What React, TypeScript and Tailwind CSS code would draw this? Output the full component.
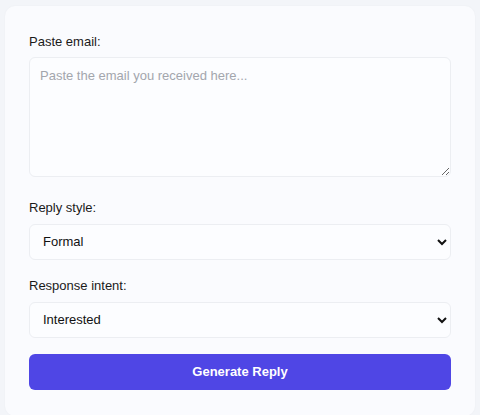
import React, { useState } from 'react';

const App: React.FC = () => {
  const [email, setEmail] = useState('');
  const [style, setStyle] = useState('Formal');
  const [intent, setIntent] = useState('Interested');

  return (
    <div className="min-h-[415px] bg-[#f3f5f9] pt-[6px] pl-[5px] font-['Liberation_Sans',Arial,sans-serif] text-[13px]">
      <div className="w-[470px] rounded-[10px] bg-[#fafbfe] px-6 pt-[28px] pb-[26px] shadow-[0_0_2px_rgba(0,0,0,0.04)]">
        <label className="mb-[7px] block leading-4 text-[#1a1a1a]">Paste email:</label>
        <textarea
          value={email}
          onChange={(e) => setEmail(e.target.value)}
          placeholder="Paste the email you received here..."
          className="h-[120px] w-full rounded-[6px] border border-[#eceef2] bg-[#fcfdff] px-[10px] py-[10px] leading-4 text-[#1a1a1a] outline-none placeholder:text-[#a3a6ad]"
        />

        <label className="mt-[17px] mb-[8px] block leading-4 text-[#1a1a1a]">Reply style:</label>
        <select
          value={style}
          onChange={(e) => setStyle(e.target.value)}
          className="h-9 w-full rounded-[6px] border border-[#eceef2] bg-[#fcfdff] pl-[9px] pr-2 text-[#111] outline-none"
        >
          <option>Formal</option>
          <option>Friendly</option>
          <option>Casual</option>
        </select>

        <label className="mt-[18px] mb-[8px] block leading-4 text-[#1a1a1a]">Response intent:</label>
        <select
          value={intent}
          onChange={(e) => setIntent(e.target.value)}
          className="h-9 w-full rounded-[6px] border border-[#eceef2] bg-[#fcfdff] pl-[9px] pr-2 text-[#111] outline-none"
        >
          <option>Interested</option>
          <option>Not interested</option>
          <option>Need more info</option>
        </select>

        <button className="mt-4 h-9 w-full rounded-[6px] bg-[#4f46e5] font-bold text-white">
          Generate Reply
        </button>
      </div>
    </div>
  );
};

export default App;
